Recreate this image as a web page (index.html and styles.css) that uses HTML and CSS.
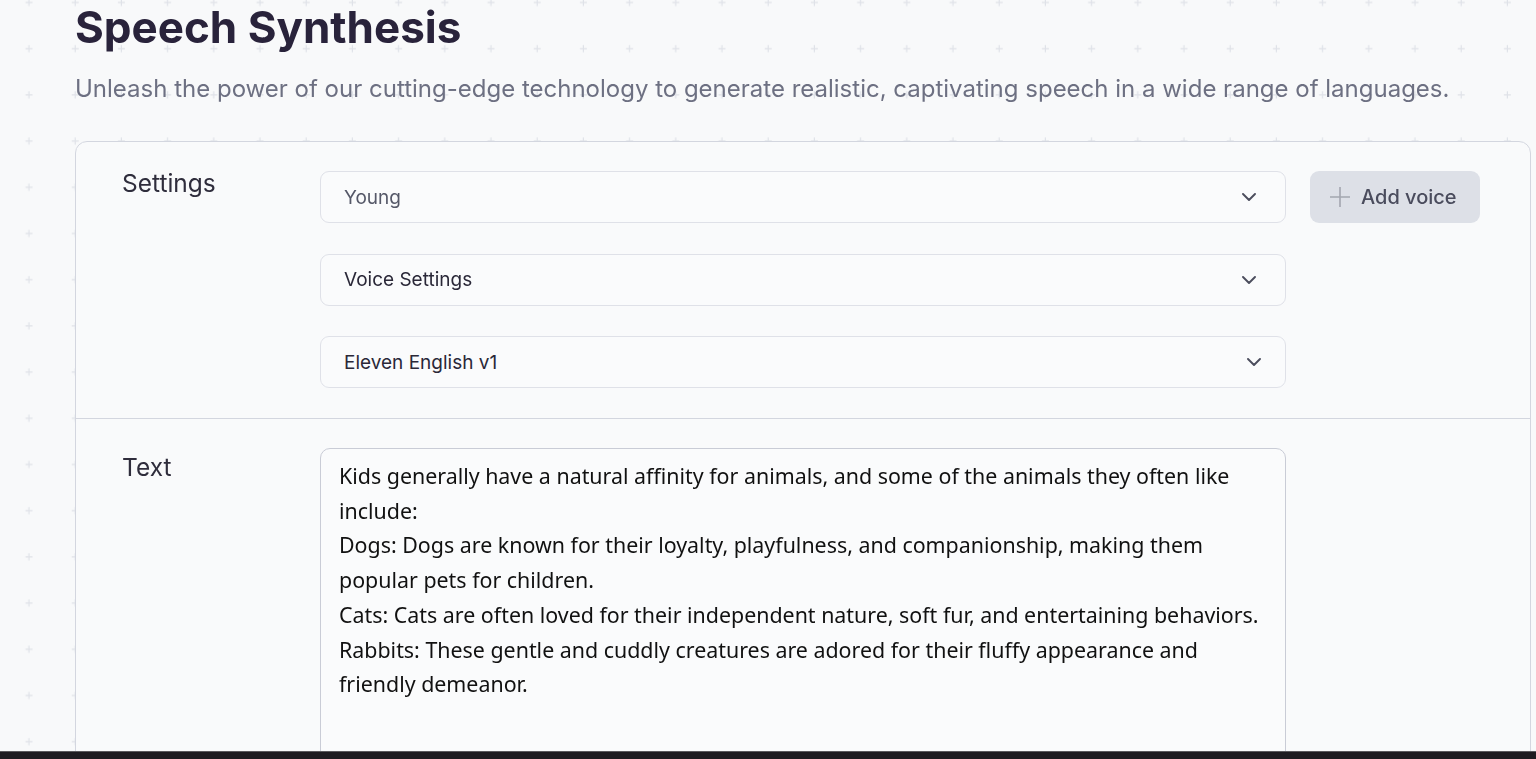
FILE: index.html
```html
<!DOCTYPE html>
<html lang="en">
<head>
<meta charset="utf-8">
<title>Speech Synthesis</title>
<link rel="stylesheet" href="styles.css">
</head>
<body>
<svg class="bg-grid" aria-hidden="true">
  <defs>
    <pattern id="plus" x="6" y="-21" width="46.2" height="46.2" patternUnits="userSpaceOnUse">
      <path d="M19.5 23.5h7M23 20v7" stroke="#dfe2e8" stroke-width="1.2" fill="none"/>
    </pattern>
  </defs>
  <rect width="100%" height="100%" fill="url(#plus)"/>
</svg>
<main class="page">
  <h1 class="title">Speech Synthesis</h1>
  <p class="subtitle">Unleash the power of our cutting-edge technology to generate realistic, captivating speech in a wide range of languages.</p>

  <section class="card">
    <div class="row row-settings">
      <div class="label">Settings</div>
      <div class="fields">
        <div class="field-line">
          <button class="select muted" type="button">
            <span>Young</span>
            <svg class="chev" viewBox="0 0 14 8"><path d="M1 1l6 6 6-6"/></svg>
          </button>
          <button class="add-btn" type="button">
            <svg class="plus-ico" viewBox="0 0 20 20"><path d="M10 0v20M0 10h20"/></svg>
            <span>Add voice</span>
          </button>
        </div>
        <div class="field-line">
          <button class="select" type="button">
            <span>Voice Settings</span>
            <svg class="chev" viewBox="0 0 14 8"><path d="M1 1l6 6 6-6"/></svg>
          </button>
        </div>
        <div class="field-line">
          <button class="select" type="button">
            <span>Eleven English v1</span>
            <svg class="chev chev-shift" viewBox="0 0 14 8"><path d="M1 1l6 6 6-6"/></svg>
          </button>
        </div>
      </div>
    </div>
    <div class="row row-text">
      <div class="label">Text</div>
      <div class="fields">
        <textarea class="text-input" spellcheck="false">Kids generally have a natural affinity for animals, and some of the animals they often like include:
Dogs: Dogs are known for their loyalty, playfulness, and companionship, making them popular pets for children.
Cats: Cats are often loved for their independent nature, soft fur, and entertaining behaviors.
Rabbits: These gentle and cuddly creatures are adored for their fluffy appearance and friendly demeanor.</textarea>
      </div>
    </div>
  </section>
</main>
<div class="taskbar"></div>
</body>
</html>
```

FILE: styles.css
```css
* { box-sizing: border-box; }

html, body {
  margin: 0;
  padding: 0;
  height: 100%;
  overflow: hidden;
  background: #f8f9fa;
}

body {
  font-family: "Inter", "Liberation Sans", sans-serif;
  color: #2b2838;
}

.bg-grid {
  position: fixed;
  inset: 0;
  width: 100%;
  height: 100%;
  z-index: 0;
}

.page {
  position: relative;
  z-index: 1;
  height: 100%;
  overflow: hidden;
  padding: 2px 5px 0 75px;
}

.title {
  margin: 0;
  font-size: 44px;
  line-height: 50px;
  font-weight: 700;
  color: #29233b;
  letter-spacing: 0;
}

.subtitle {
  margin: 19px 0 0;
  font-size: 24px;
  line-height: 36px;
  color: #6d7082;
  letter-spacing: 0;
}

.card {
  margin-top: 34px;
  border: 1px solid #d3d6df;
  border-radius: 12px;
  background: #f9fafb;
  height: 700px;
}

.row {
  display: grid;
  grid-template-columns: 198px 966px;
  padding: 29px 0 30px 46px;
}

.row-settings {
  border-bottom: 1px solid #d3d6df;
}

.row-text {
  padding-top: 29px;
}

.label {
  font-size: 24.5px;
  line-height: 24px;
  color: #2f2d3c;
}

.row-text .label {
  padding-top: 7px;
}

.fields {
  display: flex;
  flex-direction: column;
  gap: 30.5px;
}

.field-line {
  display: flex;
  gap: 24px;
  width: 1160px;
}

.select {
  flex: 0 0 966px;
  height: 52px;
  display: flex;
  align-items: center;
  justify-content: space-between;
  padding: 0 24px 0 23px;
  border: 1px solid #dfe1e8;
  border-radius: 9px;
  background: #fafbfc;
  font-family: "Inter", "Liberation Sans", sans-serif;
  font-size: 19px;
  color: #2a2838;
  text-align: left;
  cursor: pointer;
}

.select.muted {
  color: #555868;
}

.chev {
  width: 14px;
  height: 8px;
  margin-right: 5px;
  fill: none;
  stroke: #4b4d5d;
  stroke-width: 1.9;
  stroke-linecap: round;
  stroke-linejoin: round;
}

.chev-shift {
  margin-right: 0;
}

.add-btn {
  flex: 0 0 170px;
  height: 52px;
  display: flex;
  align-items: center;
  gap: 11px;
  padding: 0 0 0 20px;
  border: 0;
  border-radius: 9px;
  background: #dde0e7;
  font-family: "Inter", "Liberation Sans", sans-serif;
  font-size: 20px;
  font-weight: 500;
  color: #4a4c5d;
  cursor: pointer;
}

.plus-ico {
  width: 20px;
  height: 20px;
  fill: none;
  stroke: #a3a6b0;
  stroke-width: 1.6;
}

.text-input {
  display: block;
  width: 966px;
  height: 330px;
  padding: 10px 18px;
  border: 1px solid #c9ccd6;
  border-radius: 10px;
  background: #fafbfc;
  font-family: "Noto Sans", "Open Sans", sans-serif;
  font-size: 21.4px;
  line-height: 34.7px;
  letter-spacing: 0;
  color: #111111;
  resize: none;
  outline: none;
  overflow: hidden;
}

.taskbar {
  position: fixed;
  left: 0;
  right: 0;
  bottom: 0;
  height: 8px;
  background: #1e1c21;
  border-top: 1px solid #5b5a5e;
  z-index: 2;
}
```
